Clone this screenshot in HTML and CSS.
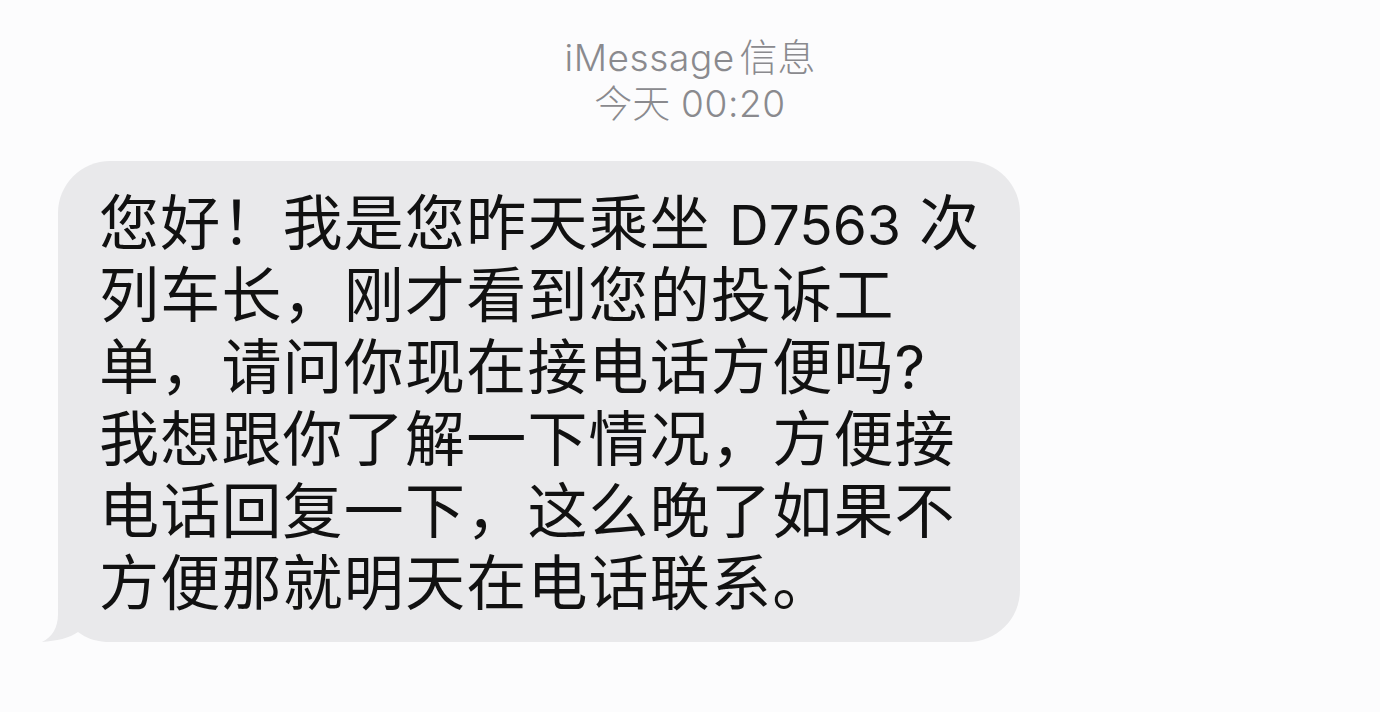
FILE: index.html
```html
<!DOCTYPE html>
<html lang="zh-CN">
<head>
    <meta charset="UTF-8">
    <meta name="viewport" content="width=device-width, initial-scale=1.0">
    <title>iMessage 信息</title>
    <link rel="stylesheet" href="styles.css">
</head>
<body>
<div class="thread">
    <div class="thread-header">
        <div class="service"><span class="latin">iMessage</span> 信息</div>
        <div class="timestamp">今天 <span class="latin">00:20</span></div>
    </div>

    <div class="bubble incoming">
        <p class="bubble-text">您好！我是您昨天乘坐 <span class="latin">D7563</span> 次<br>列车长，刚才看到您的投诉工<br>单，请问你现在接电话方便吗?<br>我想跟你了解一下情况，方便接<br>电话回复一下，这么晚了如果不<br>方便那就明天在电话联系。</p>
        <!-- tail -->
        <svg class="tail" width="64" height="50" viewBox="0 0 64 50">
            <path d="M16,0 L16,22 C16,36 10,45 0,50 L17,50 Z" fill="#e9e9eb"/>
            <path d="M0,50 C14,49 28,46 36,40 C44,46 52,49 64,50 L64,51 L0,51 Z" fill="#fcfcfd"/>
        </svg>
    </div>
</div>
</body>
</html>
```

FILE: styles.css
```css
body {
    margin: 0;
    padding: 0;
    background-color: #fcfcfd;
    font-family: Inter, "Noto Sans CJK SC", sans-serif;
}
.thread {
    padding: 34px 0 0 58px;
    width: 962px;
}
.thread-header {
    text-align: center;
    color: #8a8a8e;
    font-size: 38px;
    line-height: 46px;
    font-weight: 300;
    margin-left: -58px;
    width: 1380px;
}
.thread-header .latin {
    font-size: 37px;
    letter-spacing: 0.6px;
    line-height: 1;
}
.service {
    word-spacing: -6px;
}
.bubble {
    position: relative;
    margin-top: 35px;
    background-color: #e9e9eb;
    border-radius: 52px 52px 52px 0;
    padding: 26px 20px 23px 41px;
}
.bubble-text {
    margin: 0;
    color: #111;
    font-size: 60px;
    line-height: 72px;
    letter-spacing: 1.2px;
    white-space: nowrap;
}
.bubble-text .latin {
    font-size: 55px;
    letter-spacing: 0;
    line-height: 1;
}
.tail {
    position: absolute;
    left: -16px;
    bottom: 0;
    display: block;
}
```
